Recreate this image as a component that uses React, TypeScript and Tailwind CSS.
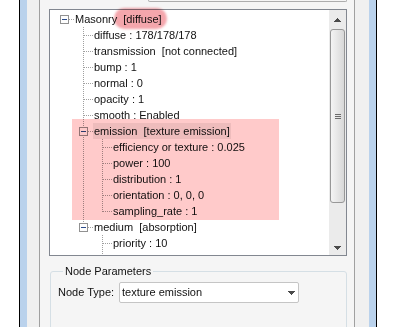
const C = [14, 33, 52];

type Row = {
  level: number;
  label: string;
  tag?: string;
  box?: boolean;
  last?: boolean;
  cont: number[];
  selected?: boolean;
};

const rows: Row[] = [
  { level: 0, label: "Masonry", tag: "[diffuse]", box: true, cont: [] },
  { level: 1, label: "diffuse : 178/178/178", cont: [] },
  { level: 1, label: "transmission", tag: "[not connected]", cont: [] },
  { level: 1, label: "bump : 1", cont: [] },
  { level: 1, label: "normal : 0", cont: [] },
  { level: 1, label: "opacity : 1", cont: [] },
  { level: 1, label: "smooth : Enabled", cont: [] },
  { level: 1, label: "emission", tag: "[texture emission]", box: true, cont: [], selected: true },
  { level: 2, label: "efficiency or texture : 0.025", cont: [1] },
  { level: 2, label: "power : 100", cont: [1] },
  { level: 2, label: "distribution : 1", cont: [1] },
  { level: 2, label: "orientation : 0, 0, 0", cont: [1] },
  { level: 2, label: "sampling_rate : 1", cont: [1], last: true },
  { level: 1, label: "medium", tag: "[absorption]", box: true, cont: [], last: true },
  { level: 2, label: "priority : 10", cont: [] },
  { level: 2, label: "absorption : 0.0", cont: [] },
];

const dot = { stroke: "#a0a0a0", strokeDasharray: "1 1" };

function Guides({ row }: { row: Row }) {
  const c = C[row.level];
  const cx = c + 0.5;
  return (
    <svg width={c + 10} height={16} className="shrink-0" shapeRendering="crispEdges">
      {row.cont.map((l) => (
        <line key={l} x1={C[l] + 0.5} y1={0} x2={C[l] + 0.5} y2={16} {...dot} />
      ))}
      {row.level > 0 && <line x1={cx} y1={0} x2={cx} y2={row.box ? 4 : 9} {...dot} />}
      {row.level > 0 && !row.last && (
        <line x1={cx} y1={row.box ? 14 : 8} x2={cx} y2={16} {...dot} />
      )}
      <line x1={row.box ? c + 5 : c + 1} y1={8.5} x2={c + 10} y2={8.5} {...dot} />
      {row.box && (
        <g>
          <rect x={c - 3.5} y={4.5} width={8} height={8} fill="#fdfdfd" stroke="#919191" />
          <line x1={c - 2} y1={8.5} x2={c + 3} y2={8.5} stroke="#2a4a8a" />
        </g>
      )}
    </svg>
  );
}

function Arrow({ up }: { up?: boolean }) {
  return (
    <svg width={7} height={4} shapeRendering="crispEdges">
      <path d={up ? "M3 0h1v1h1v1h1v1h1v1H0V3h1V2h1V1h1z" : "M0 0h7v1H6v1H5v1H4v1H3V3H2V2H1V1H0z"} fill="#4a4a4a" />
    </svg>
  );
}

export default function App() {
  return (
    <div className="flex h-[327px] w-[408px] overflow-hidden bg-white font-['Liberation_Sans',Arial,sans-serif] text-[11px] text-[#111]">
      <div className="w-[19px] shrink-0" />
      <div className="w-px shrink-0 bg-black" />
      <div className="w-[7px] shrink-0 bg-[#bad2ec]" />
      <div className="w-[12px] shrink-0 bg-[#f0f0f0]" />
      <div className="w-px shrink-0 bg-[#a0a0a0]" />

      <div className="flex w-[314px] shrink-0 flex-col overflow-hidden bg-[#f5f5f5] pl-[9px] pr-[7px]">
        <div className="ml-[99px] h-[2px] w-[199px] shrink-0 rounded-b-[3px] border-x border-b border-[#adadad]" />

        <div className="relative mt-[7px] flex h-[247px] w-[298px] shrink-0 border border-[#828790] bg-white">
          <div className="relative flex w-[279px] flex-col overflow-hidden pt-px">
            {rows.map((r, i) => (
              <div key={i} className="flex h-[16px] shrink-0 items-center leading-[16px]">
                <Guides row={r} />
                <span className={"whitespace-pre px-px " + (r.selected ? "bg-[#eeeeee]" : "")}>
                  {r.label}
                  {r.tag ? "  " + r.tag : ""}
                </span>
              </div>
            ))}
            <div className="pointer-events-none absolute left-[22px] top-[109px] h-[101px] w-[207px] bg-[#ffcaca] mix-blend-multiply" />
          </div>

          <div className="flex w-[17px] flex-col bg-[#ebebeb]">
            <div className="flex h-[17px] shrink-0 items-center justify-center pt-[2px]">
              <Arrow up />
            </div>
            <div className="mx-px mt-[2px] flex h-[174px] items-center justify-center rounded-[3px] border border-[#979797] bg-gradient-to-r from-[#f4f4f4] to-[#d8d8d8]">
              <div className="flex flex-col gap-px">
                <div className="h-px w-[6px] bg-[#6b6b6b]" />
                <div className="h-px w-[6px] bg-[#6b6b6b]" />
                <div className="h-px w-[6px] bg-[#6b6b6b]" />
              </div>
            </div>
            <div className="flex-1" />
            <div className="flex h-[17px] shrink-0 items-center justify-center pt-[3px]">
              <Arrow />
            </div>
          </div>

          <div className="pointer-events-none absolute left-[64px] top-[-2px] h-[21px] w-[53px] rounded-full bg-[#f4a6ac] blur-[1px] mix-blend-multiply" />
        </div>

        <fieldset className="ml-px mt-[9px] h-[90px] w-[297px] shrink-0 rounded-[3px] border border-[#d5dfe5] pl-[7px]">
          <legend className="ml-[5px] px-[2px] leading-[12px]">Node Parameters</legend>
          <div className="mt-[5px] flex items-center">
            <span className="w-[61px]">Node Type:</span>
            <div className="flex h-[21px] w-[180px] items-center justify-between rounded-[2px] border border-[#c5c5c5] bg-white pl-[2px] pr-[3px]">
              <span>texture emission</span>
              <Arrow />
            </div>
          </div>
        </fieldset>
      </div>

      <div className="w-px shrink-0 bg-[#a0a0a0]" />
      <div className="w-[14px] shrink-0 bg-[#f0f0f0]" />
      <div className="w-[7px] shrink-0 bg-[#bad2ec]" />
      <div className="w-px shrink-0 bg-black" />
      <div className="flex-1" />
    </div>
  );
}
